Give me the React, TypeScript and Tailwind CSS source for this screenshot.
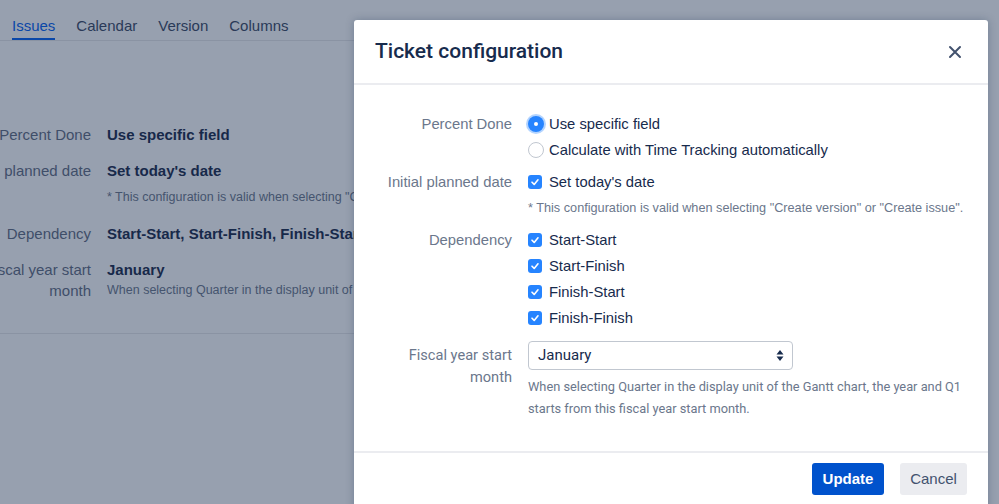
import React from "react";

const sans = { fontFamily: '"Liberation Sans", Arial, sans-serif' };
const roboto = { fontFamily: 'Roboto, "Liberation Sans", sans-serif' };

function Check() {
  return (
    <span className="flex h-[14px] w-[14px] items-center justify-center rounded-[3px] bg-[#2684ff]">
      <svg width="10" height="10" viewBox="0 0 10 10" fill="none">
        <path d="M2 5.2 L4.2 7.4 L8 2.8" stroke="white" strokeWidth="1.6" strokeLinecap="round" strokeLinejoin="round" />
      </svg>
    </span>
  );
}

function Radio({ on }: { on?: boolean }) {
  if (on)
    return (
      <span className="flex h-[16px] w-[16px] items-center justify-center rounded-full bg-[#2684ff] ring-[2px] ring-[#b3d4ff]">
        <span className="h-[4px] w-[4px] rounded-full bg-white" />
      </span>
    );
  return <span className="h-[16px] w-[16px] rounded-full border border-[#c1c7d0] bg-white" />;
}

function Opt({ ctrl, label }: { ctrl: React.ReactNode; label: string }) {
  return (
    <div className="flex h-[26px] items-center">
      <span className="flex w-[21px] items-center">{ctrl}</span>
      <span className="text-[14.8px] text-[#172b4d]">{label}</span>
    </div>
  );
}

function Label({ children }: { children: React.ReactNode }) {
  return <div className="h-[26px] text-right text-[14.8px] leading-[26px] text-[#6b778c]">{children}</div>;
}

export default function App() {
  return (
    <div className="relative h-[504px] w-[999px] overflow-hidden bg-[#97a0af]" style={sans}>
      {/* background page */}
      <div className="w-[354px]">
        <div className="flex h-[41px] items-end gap-[21px] border-b border-[#8a93a3] px-[12px] text-[15px] text-[#2a3a58]">
          <div className="border-b-[2px] border-[#0a47a8] pb-[1px] text-[#0a47a8]">Issues</div>
          <div className="pb-[3px]">Calendar</div>
          <div className="pb-[3px]">Version</div>
          <div className="pb-[3px]">Columns</div>
        </div>
        <div className="ml-[-69px] grid grid-cols-[160px_1fr] gap-x-[16px] pt-[81px] text-[15px] whitespace-nowrap">
          <div className="h-[26px] text-right leading-[26px] text-[#3f4e69]">Percent Done</div>
          <div className="h-[26px] font-bold leading-[26px] text-[#17294a]">Use specific field</div>
          <div className="mt-[10px] h-[26px] text-right leading-[26px] text-[#3f4e69]">Initial planned date</div>
          <div className="mt-[10px]">
            <div className="h-[26px] font-bold leading-[26px] text-[#17294a]">Set today's date</div>
            <div className="h-[26px] text-[12.5px] leading-[26px] text-[#45546e]">* This configuration is valid when selecting "Create version"</div>
          </div>
          <div className="mt-[11px] h-[26px] text-right leading-[26px] text-[#3f4e69]">Dependency</div>
          <div className="mt-[11px] h-[26px] font-bold leading-[26px] text-[#17294a]">Start-Start, Start-Finish, Finish-Start, Finish-Finish</div>
          <div className="mt-[12px] text-right leading-[21px] text-[#3f4e69]">Fiscal year start<br />month</div>
          <div className="mt-[12px]">
            <div className="h-[21px] font-bold leading-[21px] text-[#17294a]">January</div>
            <div className="h-[21px] text-[12.5px] leading-[21px] text-[#45546e]">When selecting Quarter in the display unit of the Gantt chart</div>
          </div>
        </div>
        <div className="mt-[32px] h-[1px] bg-[#8a93a3]" />
      </div>

      {/* modal */}
      <div className="absolute left-[354px] top-[20px] w-[634px] rounded-[3px] bg-white shadow-[0_0_8px_rgba(9,30,66,0.25)]">
        <div className="flex h-[65px] items-center justify-between border-b-[2px] border-[#ebecf0] pl-[21px] pr-[26px]">
          <div className="text-[21px] font-medium text-[#172b4d]" style={roboto}>Ticket configuration</div>
          <svg width="14" height="14" viewBox="0 0 14 14">
            <path d="M2 2 L12 12 M12 2 L2 12" stroke="#42526e" strokeWidth="2" strokeLinecap="round" />
          </svg>
        </div>
        <div className="grid grid-cols-[138px_1fr] gap-x-[16px] pb-[31px] pl-[20px] pr-[20px] pt-[26px] whitespace-nowrap">
          <Label>Percent Done</Label>
          <div>
            <Opt ctrl={<Radio on />} label="Use specific field" />
            <Opt ctrl={<Radio />} label="Calculate with Time Tracking automatically" />
          </div>

          <div className="mt-[6px]"><Label>Initial planned date</Label></div>
          <div className="mt-[6px]">
            <Opt ctrl={<Check />} label="Set today's date" />
            <div className="h-[26px] text-[12.7px] leading-[26px] text-[#6b778c]">* This configuration is valid when selecting "Create version" or "Create issue".</div>
          </div>

          <div className="mt-[6px]"><Label>Dependency</Label></div>
          <div className="mt-[6px]">
            <Opt ctrl={<Check />} label="Start-Start" />
            <Opt ctrl={<Check />} label="Start-Finish" />
            <Opt ctrl={<Check />} label="Finish-Start" />
            <Opt ctrl={<Check />} label="Finish-Finish" />
          </div>

          <div className="mt-[10px] pt-[3px] text-right text-[14.6px] leading-[22px] text-[#6b778c]" style={roboto}>Fiscal year start<br />month</div>
          <div className="mt-[10px]">
            <div className="flex h-[29px] w-[265px] items-center justify-between rounded-[4px] border border-[#c1c7d0] bg-white pl-[9px] pr-[8px] text-[15px] text-[#172b4d]" style={roboto}>
              <span>January</span>
              <svg width="8" height="13" viewBox="0 0 8 13">
                <path d="M4 1 L7.5 5.5 H0.5 Z M4 12 L7.5 7.5 H0.5 Z" fill="#172b4d" />
              </svg>
            </div>
            <div className="mt-[6px] text-[12.8px] leading-[22px] text-[#6b778c] whitespace-normal" style={roboto}>
              When selecting Quarter in the display unit of the Gantt chart, the year and Q1<br />starts from this fiscal year start month.
            </div>
          </div>
        </div>
        <div className="flex justify-end gap-[16px] border-t-[2px] border-[#ebecf0] pb-[20px] pr-[21px] pt-[10px] text-[15px]">
          <button className="h-[32px] w-[72px] rounded-[3px] bg-[#0052cc] font-bold text-white">Update</button>
          <button className="h-[32px] w-[67px] rounded-[3px] bg-[#ebecf0] text-[#42526e]">Cancel</button>
        </div>
      </div>
    </div>
  );
}
